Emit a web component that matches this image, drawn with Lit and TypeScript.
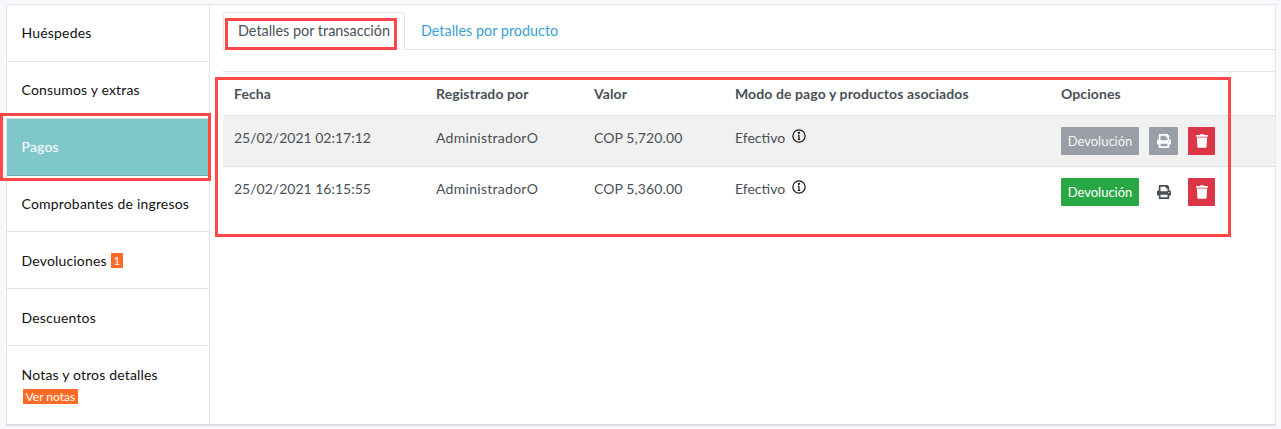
import { LitElement, html, css, svg } from "lit";
import { customElement } from "lit/decorators.js";

const printer = svg`<path fill="currentColor" d="M448 192V77.25c0-8.49-3.37-16.62-9.37-22.63L393.37 9.37c-6-6-14.14-9.37-22.63-9.37H96C78.33 0 64 14.33 64 32v160c-35.35 0-64 28.65-64 64v112c0 8.84 7.16 16 16 16h48v96c0 17.67 14.33 32 32 32h320c17.67 0 32-14.33 32-32v-96h48c8.84 0 16-7.16 16-16V256c0-35.35-28.65-64-64-64zm-64 256H128v-96h256v96zm0-224H128V64h192v48c0 8.84 7.16 16 16 16h48v96zm48 72c-13.25 0-24-10.75-24-24 0-13.26 10.75-24 24-24s24 10.74 24 24c0 13.25-10.75 24-24 24z"/>`;
const trash = svg`<path fill="currentColor" d="M432 32H312l-9.4-18.7A24 24 0 0 0 281.1 0H166.8a23.72 23.72 0 0 0-21.4 13.3L136 32H16A16 16 0 0 0 0 48v32a16 16 0 0 0 16 16h416a16 16 0 0 0 16-16V48a16 16 0 0 0-16-16zM53.2 467a48 48 0 0 0 47.9 45h245.8a48 48 0 0 0 47.9-45L416 128H32z"/>`;

const rows = [
  { date: "25/02/2021 02:17:12", value: "COP 5,720.00", disabled: true },
  { date: "25/02/2021 16:15:55", value: "COP 5,360.00", disabled: false },
];

@customElement("app-root")
export class AppRoot extends LitElement {
  static styles = css`
    :host { display: block; height: 429px; background: #f6f8fb; padding: 4px 5px 3px 6px; box-sizing: border-box; font-family: Lato, sans-serif; position: relative; overflow: hidden; font-size: 14px; letter-spacing: 0; }
    .card { height: 422px; box-sizing: border-box; background: #fff; border: 1px solid #e4e6e8; border-bottom: 2px solid #dcdedf; display: flex; }
    .side { width: 202px; flex: none; border-right: 1px solid #e2e4e6; letter-spacing: .17px; }
    .item { box-sizing: border-box; height: 57px; padding: 0 15px 2px 14.6px; border-bottom: 1px solid #e2e2e2; color: #111; display: flex; align-items: center; gap: 4px; }
    .item.active { background: #7fc8ca; color: #fff; border-top: 1px solid #cfd6d6; border-bottom: 1px solid #6fa8a9; margin-top: -1px; height: 58px; }
    .item.short { height: 56px; padding-bottom: 0; }
    .item.low { padding-bottom: 0; }
    .item.last { border-bottom: 0; flex-direction: column; align-items: flex-start; justify-content: flex-start; gap: 0; height: 79px; padding-top: 20px; }
    .badge { background: #ff6b26; color: #fff; font-size: 11px; line-height: 15px; height: 15px; padding: 0 3px; display: inline-block; margin-top: 1px; letter-spacing: 0; }
    .notes { margin: 6px 0 0 1px; font-size: 12px; padding: 0 3px; }
    .main { flex: 1; min-width: 0; padding: 7px 0 0 13px; }
    .tabs { display: flex; height: 38px; box-sizing: border-box; border-bottom: 1px solid #e4e6e8; font-size: 14.4px; }
    .tab { padding: 0 14px; height: 38px; box-sizing: border-box; line-height: 36px; color: #495057; border: 1px solid transparent; border-radius: 4px 4px 0 0; }
    .tab.on { border-color: #e4e6e8 #e4e6e8 #fff; background: #fff; }
    .tab.link { color: #3d9fd3; padding-left: 15px; }
    .pane { margin-top: 21px; border-top: 1px solid #e2e4e6; color: #495057; }
    .row { display: grid; grid-template-columns: 202px 158px 141px 326px 1fr; padding-left: 11px; }
    .head { height: 44px; align-items: center; font-weight: 700; border-bottom: 1px solid #dee2e6; letter-spacing: .1px; padding-bottom: 1px; box-sizing: border-box; }
    .data { height: 51px; border-bottom: 1px solid #dee2e6; box-sizing: border-box; padding-top: 13px; line-height: 17px; }
    .data.odd { background: #f1f1f1; }
    .data:last-child { border-bottom: 0; }
    .name { letter-spacing: .28px; }
    .val { letter-spacing: .1px; }
    .info { display: inline-block; width: 14px; height: 14px; margin-left: 3px; vertical-align: 0; color: #111; }
    .opts { display: flex; margin-top: -2px; width: 160px; }
    .btn { height: 28px; box-sizing: border-box; border-radius: 1px; color: #fff; display: flex; align-items: center; justify-content: center; }
    .dev { width: 78px; font-size: 13px; background: #28a745; }
    .dev.off { background: #9a9ea6; color: #f4f4f4; }
    .print { width: 29px; margin-left: 10px; color: #495057; }
    .print.off { background: #9a9ea6; color: #fff; }
    .print svg { width: 14px; height: 14px; }
    .del { width: 27px; margin-left: 10px; background: #dc3545; }
    .del svg { width: 12px; height: 14px; }
    .mark { position: absolute; border: 3px solid #ff4747; box-sizing: border-box; pointer-events: none; }
    .m1 { left: 0; top: 113px; width: 211px; height: 68px; }
    .m2 { left: 225px; top: 18px; width: 172px; height: 32px; }
    .m3 { left: 215px; top: 77px; width: 1016px; height: 160px; }
  `;

  render() {
    return html`
      <div class="card">
        <nav class="side">
          <div class="item">Huéspedes</div>
          <div class="item">Consumos y extras</div>
          <div class="item active">Pagos</div>
          <div class="item short">Comprobantes de ingresos</div>
          <div class="item low">Devoluciones <span class="badge">1</span></div>
          <div class="item low">Descuentos</div>
          <div class="item last">Notas y otros detalles<span class="badge notes">Ver notas</span></div>
        </nav>
        <main class="main">
          <div class="tabs">
            <div class="tab on">Detalles por transacción</div>
            <div class="tab link">Detalles por producto</div>
          </div>
          <div class="pane">
            <div class="row head">
              <div>Fecha</div><div>Registrado por</div><div>Valor</div><div>Modo de pago y productos asociados</div><div>Opciones</div>
            </div>
            ${rows.map((r) => html`
              <div class="row data ${r.disabled ? "odd" : ""}">
                <div>${r.date}</div>
                <div class="name">AdministradorO</div>
                <div class="val">${r.value}</div>
                <div>Efectivo <svg class="info" viewBox="0 0 16 16" fill="none" stroke="currentColor" stroke-width="1.4"><circle cx="8" cy="8" r="7"/><path d="M8 7v5M6.6 12h2.8M6.8 7H8"/><circle cx="8" cy="4.4" r=".6" fill="currentColor"/></svg></div>
                <div class="opts">
                  <div class="btn dev ${r.disabled ? "off" : ""}">Devolución</div>
                  <div class="btn print ${r.disabled ? "off" : ""}"><svg viewBox="0 0 512 512">${printer}</svg></div>
                  <div class="btn del"><svg viewBox="0 0 448 512">${trash}</svg></div>
                </div>
              </div>`)}
          </div>
        </main>
      </div>
      <div class="mark m1"></div>
      <div class="mark m2"></div>
      <div class="mark m3"></div>
    `;
  }
}
